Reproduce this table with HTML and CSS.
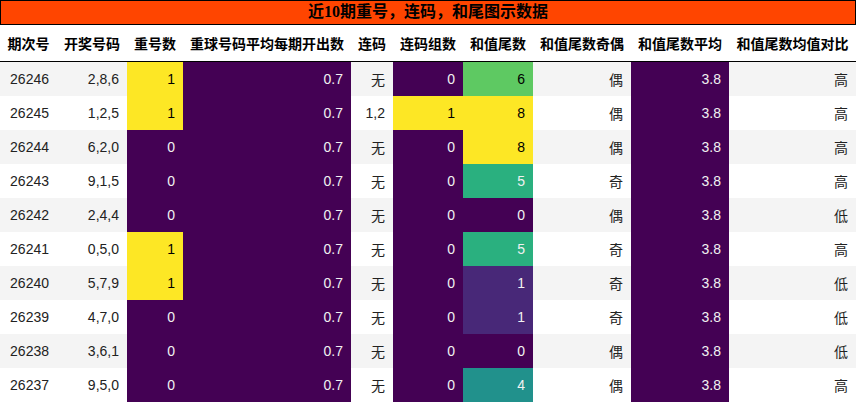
FILE: index.html
```html
<!DOCTYPE html>
<html lang="zh">
<head>
<meta charset="utf-8">
<title>近10期重号，连码，和尾图示数据</title>
<link rel="stylesheet" href="styles.css">
</head>
<body>
<div class="wrap">
  <div class="title">近10期重号，连码，和尾图示数据</div>
  <table class="grid">
    <colgroup>
      <col class="w57"><col class="w70"><col class="w56"><col class="w168"><col class="w42"><col class="w70"><col class="w70"><col class="w98"><col class="w98"><col class="w127">
    </colgroup>
    <thead>
      <tr><th>期次号</th><th>开奖号码</th><th>重号数</th><th>重球号码平均每期开出数</th><th>连码</th><th>连码组数</th><th>和值尾数</th><th>和值尾数奇偶</th><th>和值尾数平均</th><th>和值尾数均值对比</th></tr>
    </thead>
    <tbody>
      <tr><td>26246</td><td>2,8,6</td><td class="v-y">1</td><td class="v-p">0.7</td><td>无</td><td class="v-p">0</td><td class="v-6">6</td><td>偶</td><td class="v-p">3.8</td><td>高</td></tr>
      <tr><td>26245</td><td>1,2,5</td><td class="v-y">1</td><td class="v-p">0.7</td><td>1,2</td><td class="v-y">1</td><td class="v-y">8</td><td>偶</td><td class="v-p">3.8</td><td>高</td></tr>
      <tr><td>26244</td><td>6,2,0</td><td class="v-p">0</td><td class="v-p">0.7</td><td>无</td><td class="v-p">0</td><td class="v-y">8</td><td>偶</td><td class="v-p">3.8</td><td>高</td></tr>
      <tr><td>26243</td><td>9,1,5</td><td class="v-p">0</td><td class="v-p">0.7</td><td>无</td><td class="v-p">0</td><td class="v-5">5</td><td>奇</td><td class="v-p">3.8</td><td>高</td></tr>
      <tr><td>26242</td><td>2,4,4</td><td class="v-p">0</td><td class="v-p">0.7</td><td>无</td><td class="v-p">0</td><td class="v-p">0</td><td>偶</td><td class="v-p">3.8</td><td>低</td></tr>
      <tr><td>26241</td><td>0,5,0</td><td class="v-y">1</td><td class="v-p">0.7</td><td>无</td><td class="v-p">0</td><td class="v-5">5</td><td>奇</td><td class="v-p">3.8</td><td>高</td></tr>
      <tr><td>26240</td><td>5,7,9</td><td class="v-y">1</td><td class="v-p">0.7</td><td>无</td><td class="v-p">0</td><td class="v-1">1</td><td>奇</td><td class="v-p">3.8</td><td>低</td></tr>
      <tr><td>26239</td><td>4,7,0</td><td class="v-p">0</td><td class="v-p">0.7</td><td>无</td><td class="v-p">0</td><td class="v-1">1</td><td>奇</td><td class="v-p">3.8</td><td>低</td></tr>
      <tr><td>26238</td><td>3,6,1</td><td class="v-p">0</td><td class="v-p">0.7</td><td>无</td><td class="v-p">0</td><td class="v-p">0</td><td>偶</td><td class="v-p">3.8</td><td>低</td></tr>
      <tr><td>26237</td><td>9,5,0</td><td class="v-p">0</td><td class="v-p">0.7</td><td>无</td><td class="v-p">0</td><td class="v-4">4</td><td>偶</td><td class="v-p">3.8</td><td>高</td></tr>
    </tbody>
  </table>
</div>
</body>
</html>
```

FILE: styles.css
```css
html, body {
  margin: 0;
  padding: 0;
  background: #ffffff;
}

.wrap {
  width: 856px;
}

.title {
  box-sizing: border-box;
  height: 25px;
  border: 1px solid #000000;
  background: #ff4500;
  color: #000000;
  font-family: "Liberation Serif", "Noto Sans CJK SC", serif;
  font-weight: bold;
  font-size: 16px;
  line-height: 22px;
  text-align: center;
}

.grid {
  border-collapse: collapse;
  table-layout: fixed;
  width: 856px;
  font-family: "Liberation Sans", "Noto Sans CJK SC", sans-serif;
  font-size: 14px;
  color: #222222;
}

.w57 { width: 57px; }
.w70 { width: 70px; }
.w56 { width: 56px; }
.w168 { width: 168px; }
.w42 { width: 42px; }
.w98 { width: 98px; }
.w127 { width: 127px; }

.grid th {
  height: 36px;
  padding: 0;
  font-weight: bold;
  color: #000000;
  text-align: center;
  white-space: nowrap;
  border-bottom: 1px solid #000000;
  vertical-align: middle;
}

.grid td {
  height: 34px;
  padding: 0 8px 0 0;
  text-align: right;
  vertical-align: middle;
  white-space: nowrap;
  box-sizing: border-box;
}

.grid tbody tr:nth-child(odd) {
  background: #f4f4f4;
}

.grid tbody tr:nth-child(even) {
  background: #ffffff;
}

.grid td.v-p { background: #440154; color: #f1f1f1; }
.grid td.v-y { background: #fde725; color: #000000; }
.grid td.v-6 { background: #5ec962; color: #000000; }
.grid td.v-5 { background: #2ab07f; color: #f1f1f1; }
.grid td.v-4 { background: #21918c; color: #f1f1f1; }
.grid td.v-1 { background: #482878; color: #f1f1f1; }
```
